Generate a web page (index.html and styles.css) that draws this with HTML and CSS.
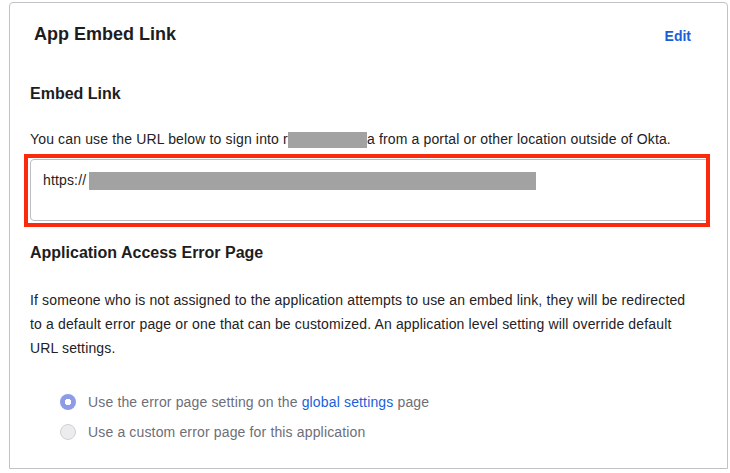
FILE: index.html
```html
<!DOCTYPE html>
<html lang="en">
<head>
  <meta charset="UTF-8" />
  <title>App Embed Link</title>
  <link rel="stylesheet" href="styles.css">
</head>
<body>
  <div class="card">
    <div class="card-header">
      <h2>App Embed Link</h2>
      <a class="edit" href="#">Edit</a>
    </div>

    <div class="card-body">
      <h3>Embed Link</h3>
      <p class="intro">You can use the URL below to sign into r<span class="redact redact-name"></span>a from a portal or other location outside of Okta.</p>

      <div class="highlight">
        <div class="url-box">https://<span class="redact redact-url"></span></div>
      </div>

      <h3 class="error-title">Application Access Error Page</h3>
      <p class="desc">If someone who is not assigned to the application attempts to use an embed link, they will be redirected to a default error page or one that can be customized. An application level setting will override default URL settings.</p>

      <div class="radios">
        <label class="radio-row">
          <span class="radio checked"></span>
          <span>Use the error page setting on the <a href="#">global settings</a> page</span>
        </label>
        <label class="radio-row">
          <span class="radio"></span>
          <span>Use a custom error page for this application</span>
        </label>
      </div>
    </div>
  </div>
</body>
</html>
```

FILE: styles.css
```css
body {
  margin: 0;
  padding: 2px 0 0 9px;
  background: #fff;
  font-family: "Liberation Sans", Arial, sans-serif;
  color: #1d1d21;
}
.card {
  width: 717px;
  height: 465px;
  border: 1px solid #c1c1c8;
  border-radius: 4px 4px 0 0;
}
.card-header {
  display: flex;
  justify-content: space-between;
  align-items: flex-start;
  padding: 19px 36px 0 24px;
}
.card-header h2 {
  margin: 0;
  font-size: 18px;
  line-height: 24px;
  font-weight: 700;
}
.edit {
  margin-top: 4px;
  font-size: 14px;
  line-height: 20px;
  font-weight: 700;
  color: #1a5fd9;
  text-decoration: none;
}
.card-body {
  padding: 38px 0 0 20px;
}
h3 {
  margin: 0;
  font-size: 16px;
  line-height: 20px;
  font-weight: 700;
}
.intro {
  margin: 25px 0 0;
  font-size: 14px;
  line-height: 20px;
  letter-spacing: 0.15px;
  color: #222226;
}
.redact {
  display: inline-block;
  background: #a2a2a2;
  vertical-align: middle;
}
.redact-name {
  width: 79px;
  height: 16px;
}
.redact-url {
  margin-left: 3px;
  width: 447px;
  height: 18px;
}
.highlight {
  margin: 5px 0 0 -6px;
  width: 676px;
  height: 64px;
  border: 4px solid #fb2a0d;
  padding: 1px 0 0 2px;
  overflow: hidden;
}
.url-box {
  width: 700px;
  height: 40px;
  border: 1px solid #bcbcc2;
  border-radius: 4px;
  padding: 10px 0 10px 12px;
  font-size: 14px;
  line-height: 20px;
  letter-spacing: 0.15px;
  color: #1d1d21;
}
.error-title {
  margin-top: 16px;
}
.desc {
  margin: 25px 0 0;
  width: 665px;
  font-size: 14px;
  line-height: 24px;
  letter-spacing: 0.15px;
  color: #222226;
}
.radios {
  margin-top: 27px;
  padding-left: 30px;
}
.radio-row {
  display: flex;
  align-items: center;
  gap: 12px;
  height: 30px;
  font-size: 14px;
  letter-spacing: 0.15px;
  color: #6e6e78;
}
.radio-row a {
  color: #1a5fd9;
  text-decoration: none;
}
.radio {
  width: 14px;
  height: 14px;
  border-radius: 50%;
  border: 1px solid #d0d0d6;
  background: #ececee;
}
.radio.checked {
  width: 16px;
  height: 16px;
  border: none;
  background: radial-gradient(circle, #fff 0 3px, #8e9be6 3.5px);
}
```
